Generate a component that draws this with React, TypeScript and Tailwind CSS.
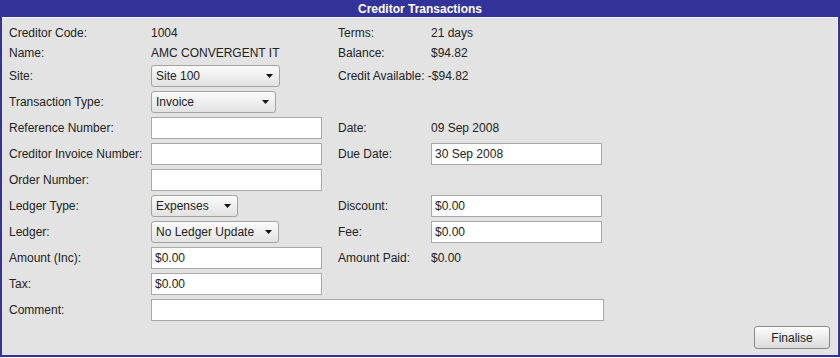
import React from "react";

const font = { fontFamily: '"Liberation Sans", Arial, sans-serif' };

function Select({ value, width }: { value: string; width: string }) {
  return (
    <div
      className={`${width} h-[22px] flex items-center justify-between pl-[4px] pr-[6px] border border-[#a3a3a3] rounded-[3px] bg-gradient-to-b from-[#fbfbfb] to-[#e2e2e2] text-[12px] text-[#222]`}
    >
      <span>{value}</span>
      <svg width="7" height="4" viewBox="0 0 7 4">
        <path d="M0 0 L7 0 L3.5 4 Z" fill="#111" />
      </svg>
    </div>
  );
}

function Input({ value = "", width = "w-[171px]" }: { value?: string; width?: string }) {
  return (
    <div className={`${width} h-[22px] flex items-center pl-[3px] border border-[#a8a8a8] bg-white text-[12px] text-[#222]`}>
      {value}
    </div>
  );
}

function Row({
  label,
  mid,
  rlabel,
  right,
  h = "h-[22px]",
}: {
  label: string;
  mid?: React.ReactNode;
  rlabel?: React.ReactNode;
  right?: React.ReactNode;
  h?: string;
}) {
  return (
    <div className={`flex items-center ${h}`}>
      <div className="w-[142px] shrink-0 whitespace-nowrap">{label}</div>
      <div className="w-[187px] shrink-0">{mid}</div>
      <div className="w-[93px] shrink-0 whitespace-nowrap">{rlabel}</div>
      <div>{right}</div>
    </div>
  );
}

export default function App() {
  return (
    <div className="w-[840px] h-[358px] bg-white" style={font}>
      <div className="w-[840px] h-[357px] bg-[#333399] px-[2px] pb-[2px] flex flex-col">
        <div className="h-[17px] flex items-center justify-center text-white font-bold text-[12px] shrink-0">
          Creditor Transactions
        </div>
        <div className="flex-1 bg-[#e3e3e3] border-t border-r border-[#f2f2f2] pl-[7px] pt-[7px] text-[12px] text-[#222] flex flex-col gap-[4px]">
          <Row h="h-[16px]" label="Creditor Code:" mid="1004" rlabel="Terms:" right="21 days" />
          <Row h="h-[16px]" label="Name:" mid="AMC CONVERGENT IT" rlabel="Balance:" right="$94.82" />
          <div className="flex items-center h-[22px]">
            <div className="w-[142px] shrink-0">Site:</div>
            <div className="w-[187px] shrink-0">
              <Select value="Site 100" width="w-[129px]" />
            </div>
            <div className="whitespace-nowrap">Credit Available: -$94.82</div>
          </div>
          <Row label="Transaction Type:" mid={<Select value="Invoice" width="w-[125px]" />} />
          <Row label="Reference Number:" mid={<Input />} rlabel="Date:" right="09 Sep 2008" />
          <Row label="Creditor Invoice Number:" mid={<Input />} rlabel="Due Date:" right={<Input value="30 Sep 2008" />} />
          <Row label="Order Number:" mid={<Input />} />
          <Row label="Ledger Type:" mid={<Select value="Expenses" width="w-[87px]" />} rlabel="Discount:" right={<Input value="$0.00" />} />
          <Row label="Ledger:" mid={<Select value="No Ledger Update" width="w-[128px]" />} rlabel="Fee:" right={<Input value="$0.00" />} />
          <Row label="Amount (Inc):" mid={<Input value="$0.00" />} rlabel="Amount Paid:" right="$0.00" />
          <Row label="Tax:" mid={<Input value="$0.00" />} />
          <div className="flex items-center h-[22px]">
            <div className="w-[142px] shrink-0">Comment:</div>
            <Input width="w-[453px]" />
          </div>
          <div className="flex justify-end pr-[7px] mt-[1px]">
            <button className="w-[76px] h-[23px] border border-[#8a8a8a] rounded-[3px] bg-gradient-to-b from-[#fdfdfd] to-[#dadada] text-[12px] text-[#222]" style={font}>
              Finalise
            </button>
          </div>
        </div>
      </div>
    </div>
  );
}
